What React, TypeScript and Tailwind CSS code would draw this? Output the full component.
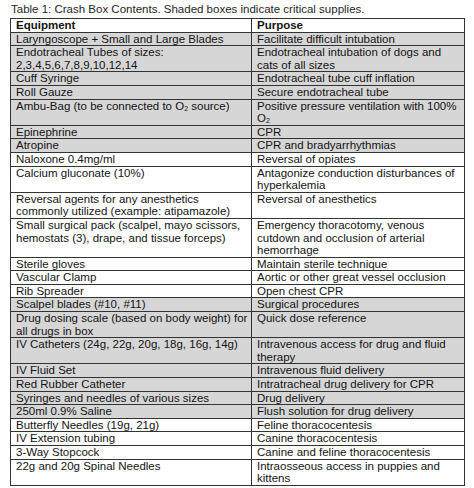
import React from "react";

type Row = { a: React.ReactNode; b: React.ReactNode; shaded: boolean };

const O2 = (
  <>
    O<sub className="text-[7px] align-baseline relative top-[1px]">2</sub>
  </>
);

const rows: Row[] = [
  { a: "Laryngoscope + Small and Large Blades", b: "Facilitate difficult intubation", shaded: true },
  {
    a: (
      <>
        Endotracheal Tubes of sizes:
        <br />
        2,3,4,5,6,7,8,9,10,12,14
      </>
    ),
    b: (
      <>
        Endotracheal intubation of dogs and
        <br />
        cats of all sizes
      </>
    ),
    shaded: true,
  },
  { a: "Cuff Syringe", b: "Endotracheal tube cuff inflation", shaded: true },
  { a: "Roll Gauze", b: "Secure endotracheal tube", shaded: true },
  {
    a: <>Ambu-Bag (to be connected to {O2} source)</>,
    b: (
      <>
        Positive pressure ventilation with 100%
        <br />
        {O2}
      </>
    ),
    shaded: true,
  },
  { a: "Epinephrine", b: "CPR", shaded: true },
  { a: "Atropine", b: "CPR and bradyarrhythmias", shaded: true },
  { a: "Naloxone 0.4mg/ml", b: "Reversal of opiates", shaded: false },
  {
    a: "Calcium gluconate (10%)",
    b: (
      <>
        Antagonize conduction disturbances of
        <br />
        hyperkalemia
      </>
    ),
    shaded: false,
  },
  {
    a: (
      <>
        Reversal agents for any anesthetics
        <br />
        commonly utilized (example: atipamazole)
      </>
    ),
    b: "Reversal of anesthetics",
    shaded: false,
  },
  {
    a: (
      <>
        Small surgical pack (scalpel, mayo scissors,
        <br />
        hemostats (3), drape, and tissue forceps)
      </>
    ),
    b: (
      <>
        Emergency thoracotomy, venous
        <br />
        cutdown and occlusion of arterial
        <br />
        hemorrhage
      </>
    ),
    shaded: false,
  },
  { a: "Sterile gloves", b: "Maintain sterile technique", shaded: false },
  { a: "Vascular Clamp", b: "Aortic or other great vessel occlusion", shaded: false },
  { a: "Rib Spreader", b: "Open chest CPR", shaded: false },
  { a: "Scalpel blades (#10, #11)", b: "Surgical procedures", shaded: true },
  {
    a: (
      <>
        Drug dosing scale (based on body weight) for
        <br />
        all drugs in box
      </>
    ),
    b: "Quick dose reference",
    shaded: true,
  },
  {
    a: "IV Catheters (24g, 22g, 20g, 18g, 16g, 14g)",
    b: (
      <>
        Intravenous access for drug and fluid
        <br />
        therapy
      </>
    ),
    shaded: true,
  },
  { a: "IV Fluid Set", b: "Intravenous fluid delivery", shaded: true },
  { a: "Red Rubber Catheter", b: "Intratracheal drug delivery for CPR", shaded: true },
  { a: "Syringes and needles of various sizes", b: "Drug delivery", shaded: true },
  { a: "250ml 0.9% Saline", b: "Flush solution for drug delivery", shaded: true },
  { a: "Butterfly Needles (19g, 21g)", b: "Feline thoracocentesis", shaded: false },
  { a: "IV Extension tubing", b: "Canine thoracocentesis", shaded: false },
  { a: "3-Way Stopcock", b: "Canine and feline thoracocentesis", shaded: false },
  {
    a: "22g and 20g Spinal Needles",
    b: (
      <>
        Intraosseous access in puppies and
        <br />
        kittens
      </>
    ),
    shaded: false,
  },
];

export default function App() {
  return (
    <div
      className="w-[474px] h-[488px] bg-white text-[#141414] overflow-hidden"
      style={{ fontFamily: '"Liberation Sans", Arial, sans-serif' }}
    >
      <div className="pl-[11px] pt-[3px] h-[18px] text-[11.5px] leading-[12px] text-[#262626] whitespace-nowrap">
        Table 1: Crash Box Contents. Shaded boxes indicate critical supplies.
      </div>
      <table className="ml-[10px] table-fixed border-collapse text-[11.5px] leading-[12.6px] w-[454px]">
        <colgroup>
          <col className="w-[241px]" />
          <col className="w-[213px]" />
        </colgroup>
        <thead>
          <tr className="bg-white">
            <th className="border border-[#333333] px-[5px] py-0 text-left font-bold align-top whitespace-nowrap">
              Equipment
            </th>
            <th className="border border-[#333333] px-[5px] py-0 text-left font-bold align-top whitespace-nowrap">
              Purpose
            </th>
          </tr>
        </thead>
        <tbody>
          {rows.map((r, i) => (
            <tr key={i} className={r.shaded ? "bg-[#d6d6d6]" : "bg-white"}>
              <td className="border border-[#333333] px-[5px] py-0 align-top whitespace-nowrap">
                {r.a}
              </td>
              <td className="border border-[#333333] px-[5px] py-0 align-top whitespace-nowrap">
                {r.b}
              </td>
            </tr>
          ))}
        </tbody>
      </table>
    </div>
  );
}
